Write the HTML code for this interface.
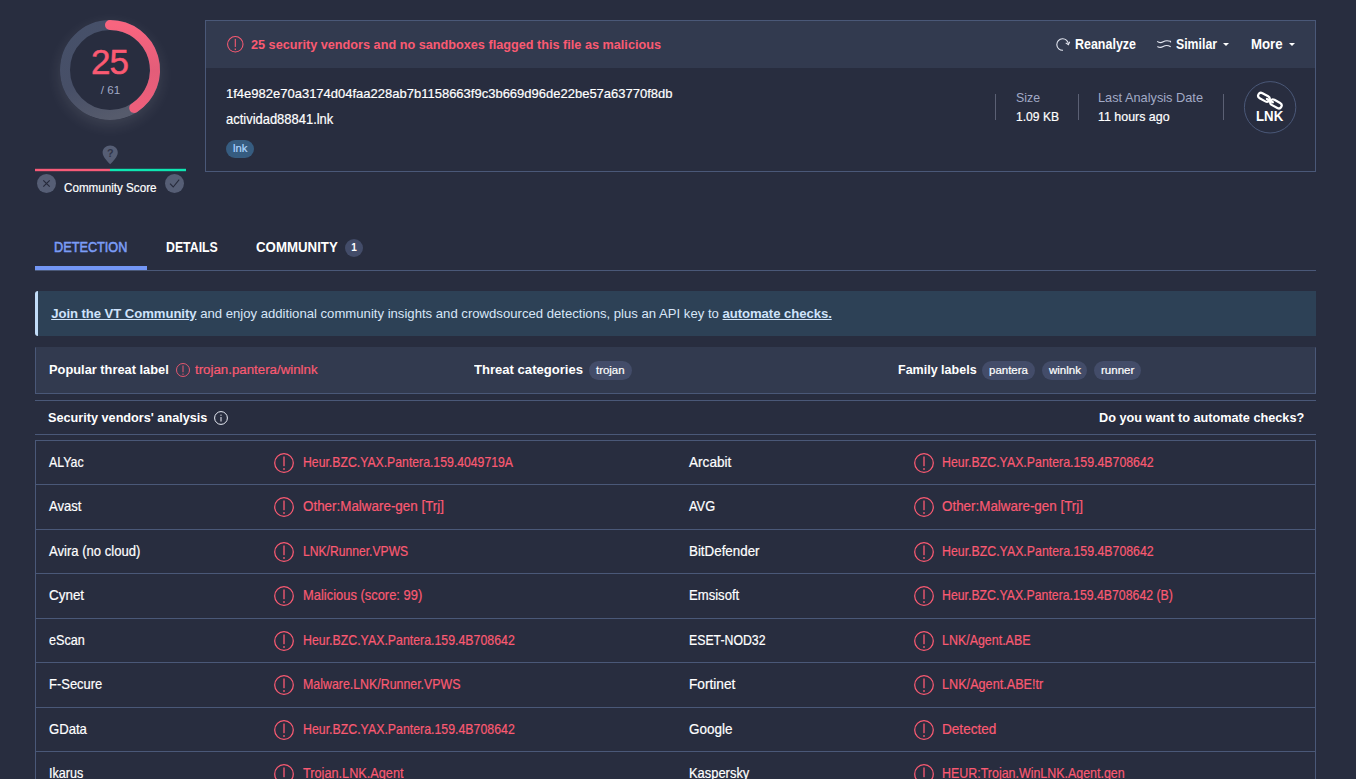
<!DOCTYPE html>
<html lang="en">
<head>
<meta charset="utf-8">
<title>VirusTotal - File - 1f4e982e70a3174d04faa228ab7b1158663f9c3b669d96de22be57a63770f8db</title>
<style>
html,body{margin:0;padding:0}
body{width:1356px;height:779px;overflow:hidden;position:relative;background:#282d3f;color:#fff;
 font-family:"Liberation Sans",Arial,sans-serif;font-size:13px;line-height:20px}
.a{position:absolute;white-space:nowrap}
.b{font-weight:700}
.red{color:#fa5a72}
.mut{color:#a2aac6}
svg{position:absolute;overflow:visible}
/* top panel */
.panel{position:absolute;left:205px;top:20px;width:1109px;height:150px;border:1px solid #4a5878}
.phead{position:absolute;left:0;top:0;width:1109px;height:47px;background:#323a4f}
.vdiv{position:absolute;width:1px;height:26px;top:94px;background:#5b6074}
.pill{position:absolute;height:19px;line-height:19px;border-radius:10px;background:#434c69;color:#f2f4fa;font-size:11.3px;text-align:center;white-space:nowrap}
/* tabs */
.tabline{position:absolute;left:35px;top:270px;width:1281px;height:1px;background:#4a5878}
.tabact{position:absolute;left:35px;top:266px;width:112px;height:4px;background:#7396f5}
.tab{position:absolute;font-size:14px;white-space:nowrap}
.pt{font-size:11.1px;color:#fff;-webkit-text-stroke:0.2px #fff}
/* banner */
.banner{position:absolute;left:35px;top:291px;width:1278px;height:45px;background:#2d4156;border-left:3px solid #c2dcf8;border-radius:3px 0 0 3px}
.banner span{position:absolute;left:13.2px;top:13px;font-size:13.13px;color:#d7e6f8;white-space:nowrap}
.banner b{color:#cfe3fb;text-decoration:underline;letter-spacing:-0.06px}
/* threat */
.threat{position:absolute;left:35px;top:347px;width:1281px;height:47px;background:#323a4f;border:1px solid #4a5878;border-top-color:#323a4f;box-sizing:border-box;border-right-color:#4a5878}
.hline{position:absolute;left:35px;width:1281px;height:1px;background:#4a5878}
/* table */
.tbl{position:absolute;left:35px;top:440px;width:1281px;height:345px;border:1px solid #4a5878;border-bottom:0;box-sizing:border-box}
.rl{position:absolute;left:36px;width:1279px;height:1px;background:#4a5878}
.vn{font-size:14.3px;color:#fff;-webkit-text-stroke:0.2px #fff}
.dt{font-size:14.4px;color:#fa5a72;-webkit-text-stroke:0.2px #fa5a72}
.di{width:20px;height:20px}
.w{-webkit-text-stroke:0.2px #fff}
</style>
</head>
<body>
<svg width="0" height="0" style="left:0;top:0">
 <defs>
  <symbol id="alert" viewBox="0 0 20 20" overflow="visible">
   <circle cx="10" cy="10" r="9.3" fill="none" stroke="#fa5a72" stroke-width="1.25"/>
   <rect x="9.35" y="3.5" width="1.3" height="9.7" fill="#fa5a72"/>
   <rect x="9.3" y="15.1" width="1.4" height="1.8" fill="#fa5a72"/>
  </symbol>
  <linearGradient id="rg" x1="0" y1="0" x2="0" y2="1">
   <stop offset="0" stop-color="#f8657f"/>
   <stop offset="0.55" stop-color="#e35d79"/>
   <stop offset="1" stop-color="#ee5f7b"/>
  </linearGradient>
  <linearGradient id="gg" x1="0.2" y1="0" x2="0.6" y2="1">
   <stop offset="0" stop-color="#465069"/>
   <stop offset="0.55" stop-color="#474f67"/>
   <stop offset="1" stop-color="#565b6c"/>
  </linearGradient>
 </defs>
</svg>

<!-- detection ring -->
<div style="position:absolute;left:60px;top:20px;width:100px;height:100px;border-radius:50%;box-shadow:0 5px 16px rgba(255,255,255,0.11)"></div>
<svg style="left:50px;top:10px" width="120" height="120" viewBox="0 0 120 120">
 <circle cx="60" cy="60" r="50" fill="#282d3f"/>
 <circle cx="60" cy="60" r="45" fill="none" stroke="url(#gg)" stroke-width="10"/>
 <path d="M60 15 A45 45 0 0 1 84.18 97.95" fill="none" stroke="url(#rg)" stroke-width="10" stroke-linecap="round"/>
</svg>
<div class="a red" style="left:70px;top:42px;width:80px;text-align:center;font-size:35px;line-height:40px;letter-spacing:-1px;text-indent:-1px;-webkit-text-stroke:0.5px #fa5a72">25</div>
<div class="a mut" style="left:70px;top:80.5px;width:81px;text-align:center;font-size:11.6px;line-height:18px">/ 61</div>

<!-- community score -->
<svg style="left:101.9px;top:144.9px" width="16.4" height="20" viewBox="0 0 16 21" preserveAspectRatio="none">
 <path d="M8 0.5C3.9 0.5 0.6 3.7 0.6 7.8c0 4.6 4.9 9.6 7.4 12.4 2.5-2.8 7.4-7.8 7.4-12.4C15.4 3.7 12.1 0.5 8 0.5z" fill="#565e75"/>
 <text x="8" y="12.3" font-size="10.5" font-weight="700" text-anchor="middle" fill="#2f3448" font-family="Liberation Sans, sans-serif">?</text>
</svg>
<svg style="left:35px;top:168px" width="151" height="4" viewBox="0 0 151 4"><rect x="0" y="0.8" width="75" height="2.4" fill="#f85b78"/><rect x="75" y="0.8" width="76" height="2.4" fill="#0ee6b2"/></svg>
<svg style="left:36.5px;top:174px" width="19" height="19" viewBox="0 0 19 19">
 <circle cx="9.5" cy="9.5" r="9.5" fill="#565e75"/>
 <path d="M6.3 6.3l6.4 6.4M12.7 6.3l-6.4 6.4" stroke="#262a3b" stroke-width="1.2" fill="none"/>
</svg>
<svg style="left:164.7px;top:174px" width="19" height="19" viewBox="0 0 19 19">
 <circle cx="9.5" cy="9.5" r="9.5" fill="#565e75"/>
 <path d="M5 9.7l3.2 3.3 6-7.3" stroke="#262a3b" stroke-width="1.1" fill="none"/>
</svg>
<div class="a w" style="left:63.7px;font-size:13.5px;top:178.30px;transform:scaleX(0.8621);transform-origin:0 0;">Community Score</div>

<!-- file panel -->
<div class="panel">
 <div class="phead"></div>
</div>
<svg style="left:227px;top:36px" width="16.6" height="16.6" viewBox="0 0 20 20"><use href="#alert"/></svg>
<div class="a b red" style="left:251.1px;font-size:12.8px;top:35.20px;transform:scaleX(0.9906);transform-origin:0 0;">25 security vendors and no sandboxes flagged this file as malicious</div>

<!-- actions -->
<svg style="left:1055px;top:37px" width="16" height="15" viewBox="0 0 16 15" fill="none" stroke="#e4e7f1" stroke-width="1.1">
 <path d="M8 13.3A5.8 5.8 0 1 1 13.4 7.5"/>
 <path d="M10.7 5.9l2.7 1.8 1.3-3"/>
</svg>
<div class="a b" style="left:1075px;font-size:13.8px;top:35.00px;transform:scaleX(0.9037);transform-origin:0 0;">Reanalyze</div>
<svg style="left:1157px;top:40px" width="14" height="9" viewBox="0 0 14 9" fill="none" stroke="#e4e7f1" stroke-width="1.15">
 <path d="M0.2 1.4C2 2.9 4.3 3 6.2 1.8S10.6 0.5 13.4 1.3l0.3 1.1"/>
 <path d="M0.4 6.4C2.2 7.6 4.3 7.6 6.2 6.5S10.6 5 13.7 6.7"/>
</svg>
<div class="a b" style="left:1175.5px;font-size:13.8px;top:35.00px;transform:scaleX(0.8910);transform-origin:0 0;">Similar</div>
<svg style="left:1223px;top:43px" width="6" height="3" viewBox="0 0 6 3"><path d="M0 0h6L3 3z" fill="#fff"/></svg>
<div class="a b" style="left:1250.5px;font-size:13.8px;top:35.00px;transform:scaleX(0.9585);transform-origin:0 0;">More</div>
<svg style="left:1289px;top:43px" width="6" height="3" viewBox="0 0 6 3"><path d="M0 0h6L3 3z" fill="#fff"/></svg>

<!-- file info -->
<div class="a w" style="left:225.5px;font-size:13.2px;top:83.80px;transform:scaleX(0.9857);transform-origin:0 0;">1f4e982e70a3174d04faa228ab7b1158663f9c3b669d96de22be57a63770f8db</div>
<div class="a w" style="left:225.5px;font-size:14.2px;top:108.80px;transform:scaleX(0.9129);transform-origin:0 0;">actividad88841.lnk</div>
<div class="pill" style="left:226px;top:139.5px;width:28px;height:18px;background:#365c80"></div>
<div class="a" style="left:232.7px;color:#acd5ff;font-size:10.8px;-webkit-text-stroke:0.2px #acd5ff;top:138.00px;transform:scaleX(1.0425);transform-origin:0 0;">lnk</div>

<div class="vdiv" style="left:995px"></div>
<div class="a mut" style="left:1015.5px;font-size:13.5px;top:88.20px;transform:scaleX(0.9137);transform-origin:0 0;">Size</div>
<div class="a w" style="left:1015.5px;font-size:13.3px;top:107.40px;transform:scaleX(0.9089);transform-origin:0 0;">1.09 KB</div>
<div class="vdiv" style="left:1078px"></div>
<div class="a mut" style="left:1098px;font-size:13.5px;top:88.20px;transform:scaleX(0.9454);transform-origin:0 0;">Last Analysis Date</div>
<div class="a w" style="left:1098px;font-size:13.3px;top:107.40px;transform:scaleX(0.9342);transform-origin:0 0;">11 hours ago</div>
<div class="vdiv" style="left:1223px"></div>
<svg style="left:1243.5px;top:80.5px" width="53" height="53" viewBox="0 0 53 53">
 <circle cx="26.1" cy="26.3" r="25.7" fill="none" stroke="#4a5878" stroke-width="1"/>
 <g fill="none" stroke="#fff" stroke-width="2.2" transform="translate(25.9 19.6) rotate(29)">
  <rect x="-13" y="-2.9" width="12.3" height="5.8" rx="2.9"/>
  <rect x="0.7" y="-2.9" width="12.3" height="5.8" rx="2.9"/>
  <path d="M-3.4 0H3.4" stroke-linecap="round"/>
 </g>
</svg>
<div class="a b" style="left:1255.6px;font-size:14px;top:105.80px;transform:scaleX(0.9451);transform-origin:0 0;">LNK</div>

<!-- tabs -->
<div class="tab" style="left:54.3px;color:#7b9cf6;-webkit-text-stroke:0.55px #7b9cf6;top:237.40px;transform:scaleX(0.9074);transform-origin:0 0;">DETECTION</div>
<div class="tab b" style="left:166.3px;top:237.40px;transform:scaleX(0.8801);transform-origin:0 0;">DETAILS</div>
<div class="tab b" style="left:256.3px;top:237.40px;transform:scaleX(0.9475);transform-origin:0 0;">COMMUNITY</div>
<div class="a b" style="left:345px;top:238.5px;width:18px;height:18px;border-radius:9px;background:#434c69;font-size:10px;line-height:18px;text-align:center">1</div>
<div class="tabline"></div>
<div class="tabact"></div>

<!-- banner -->
<div class="banner"><span><b>Join the VT Community</b> and enjoy additional community insights and crowdsourced detections, plus an API key to <b>automate checks.</b></span></div>

<!-- threat labels -->
<div class="threat"></div>
<div class="a b" style="left:49px;font-size:13.7px;top:359.50px;transform:scaleX(0.9375);transform-origin:0 0;">Popular threat label</div>
<svg style="left:176px;top:363px" width="14" height="14" viewBox="0 0 20 20"><use href="#alert"/></svg>
<div class="a red" style="left:195px;font-size:13.7px;-webkit-text-stroke:0.2px #fa5a72;top:359.60px;transform:scaleX(0.9706);transform-origin:0 0;">trojan.pantera/winlnk</div>
<div class="a b" style="left:473.5px;font-size:13.7px;top:359.50px;transform:scaleX(0.9552);transform-origin:0 0;">Threat categories</div>
<div class="pill" style="left:589px;top:361px;width:43px"></div>
<div class="a pt" style="left:596px;top:360.30px;transform:scaleX(1.0301);transform-origin:0 0;">trojan</div>
<div class="a b" style="left:897.5px;font-size:13.7px;top:359.50px;transform:scaleX(0.9143);transform-origin:0 0;">Family labels</div>
<div class="pill" style="left:982px;top:361px;width:52.5px"></div>
<div class="a pt" style="left:989px;top:360.30px;transform:scaleX(1.0361);transform-origin:0 0;">pantera</div>
<div class="pill" style="left:1042.2px;top:361px;width:44.8px"></div>
<div class="a pt" style="left:1048.5px;top:360.30px;transform:scaleX(1.0380);transform-origin:0 0;">winlnk</div>
<div class="pill" style="left:1094px;top:361px;width:47px"></div>
<div class="a pt" style="left:1100.7px;top:360.30px;transform:scaleX(1.0412);transform-origin:0 0;">runner</div>

<!-- vendors header -->
<div class="hline" style="top:400px"></div>
<div class="hline" style="top:434px"></div>
<div class="a b" style="left:48px;font-size:13.7px;top:408.10px;transform:scaleX(0.9259);transform-origin:0 0;">Security vendors' analysis</div>
<svg style="left:214px;top:411px" width="14" height="14" viewBox="0 0 14 14">
 <circle cx="7" cy="7" r="6.4" fill="none" stroke="#e9ecf5" stroke-width="1"/>
 <rect x="6.5" y="6" width="1" height="4.5" fill="#e9ecf5"/>
 <rect x="6.5" y="3.6" width="1" height="1.2" fill="#e9ecf5"/>
</svg>
<div class="a b" style="left:1099px;font-size:13.7px;top:408.10px;transform:scaleX(0.9271);transform-origin:0 0;">Do you want to automate checks?</div>

<!-- vendors table -->
<div class="tbl"></div>
<div class="rl" style="top:484px"></div>
<div class="rl" style="top:529px"></div>
<div class="rl" style="top:573px"></div>
<div class="rl" style="top:618px"></div>
<div class="rl" style="top:662px"></div>
<div class="rl" style="top:707px"></div>
<div class="rl" style="top:751px"></div>
<div class="a vn" style="left:49.4px;top:452.00px;transform:scaleX(0.8672);transform-origin:0 0;">ALYac</div><svg class="di" style="left:274px;top:453.0px" viewBox="0 0 20 20"><use href="#alert"/></svg><div class="a dt" style="left:302.7px;top:452.00px;transform:scaleX(0.8504);transform-origin:0 0;">Heur.BZC.YAX.Pantera.159.4049719A</div><div class="a vn" style="left:689.2px;top:452.00px;transform:scaleX(0.9506);transform-origin:0 0;">Arcabit</div><svg class="di" style="left:913.7px;top:453.0px" viewBox="0 0 20 20"><use href="#alert"/></svg><div class="a dt" style="left:942.4px;top:452.00px;transform:scaleX(0.8573);transform-origin:0 0;">Heur.BZC.YAX.Pantera.159.4B708642</div>
<div class="a vn" style="left:49.4px;top:496.40px;transform:scaleX(0.9127);transform-origin:0 0;">Avast</div><svg class="di" style="left:274px;top:497.4px" viewBox="0 0 20 20"><use href="#alert"/></svg><div class="a dt" style="left:302.7px;top:496.40px;transform:scaleX(0.9312);transform-origin:0 0;">Other:Malware-gen [Trj]</div><div class="a vn" style="left:689.2px;top:496.40px;transform:scaleX(0.8957);transform-origin:0 0;">AVG</div><svg class="di" style="left:913.7px;top:497.4px" viewBox="0 0 20 20"><use href="#alert"/></svg><div class="a dt" style="left:942.4px;top:496.40px;transform:scaleX(0.9312);transform-origin:0 0;">Other:Malware-gen [Trj]</div>
<div class="a vn" style="left:49.4px;top:540.90px;transform:scaleX(0.9141);transform-origin:0 0;">Avira (no cloud)</div><svg class="di" style="left:274px;top:541.9px" viewBox="0 0 20 20"><use href="#alert"/></svg><div class="a dt" style="left:302.7px;top:540.90px;transform:scaleX(0.8431);transform-origin:0 0;">LNK/Runner.VPWS</div><div class="a vn" style="left:689.2px;top:540.90px;transform:scaleX(0.9338);transform-origin:0 0;">BitDefender</div><svg class="di" style="left:913.7px;top:541.9px" viewBox="0 0 20 20"><use href="#alert"/></svg><div class="a dt" style="left:942.4px;top:540.90px;transform:scaleX(0.8573);transform-origin:0 0;">Heur.BZC.YAX.Pantera.159.4B708642</div>
<div class="a vn" style="left:49.4px;top:585.30px;transform:scaleX(0.9395);transform-origin:0 0;">Cynet</div><svg class="di" style="left:274px;top:586.3px" viewBox="0 0 20 20"><use href="#alert"/></svg><div class="a dt" style="left:302.7px;top:585.30px;transform:scaleX(0.8978);transform-origin:0 0;">Malicious (score: 99)</div><div class="a vn" style="left:689.2px;top:585.30px;transform:scaleX(0.9156);transform-origin:0 0;">Emsisoft</div><svg class="di" style="left:913.7px;top:586.3px" viewBox="0 0 20 20"><use href="#alert"/></svg><div class="a dt" style="left:942.4px;top:585.30px;transform:scaleX(0.8548);transform-origin:0 0;">Heur.BZC.YAX.Pantera.159.4B708642 (B)</div>
<div class="a vn" style="left:49.4px;top:629.70px;transform:scaleX(0.8829);transform-origin:0 0;">eScan</div><svg class="di" style="left:274px;top:630.7px" viewBox="0 0 20 20"><use href="#alert"/></svg><div class="a dt" style="left:302.7px;top:629.70px;transform:scaleX(0.8577);transform-origin:0 0;">Heur.BZC.YAX.Pantera.159.4B708642</div><div class="a vn" style="left:689.2px;top:629.70px;transform:scaleX(0.8596);transform-origin:0 0;">ESET-NOD32</div><svg class="di" style="left:913.7px;top:630.7px" viewBox="0 0 20 20"><use href="#alert"/></svg><div class="a dt" style="left:942.4px;top:629.70px;transform:scaleX(0.8642);transform-origin:0 0;">LNK/Agent.ABE</div>
<div class="a vn" style="left:49.4px;top:674.20px;transform:scaleX(0.9065);transform-origin:0 0;">F-Secure</div><svg class="di" style="left:274px;top:675.2px" viewBox="0 0 20 20"><use href="#alert"/></svg><div class="a dt" style="left:302.7px;top:674.20px;transform:scaleX(0.8599);transform-origin:0 0;">Malware.LNK/Runner.VPWS</div><div class="a vn" style="left:689.2px;top:674.20px;transform:scaleX(0.9573);transform-origin:0 0;">Fortinet</div><svg class="di" style="left:913.7px;top:675.2px" viewBox="0 0 20 20"><use href="#alert"/></svg><div class="a dt" style="left:942.4px;top:674.20px;transform:scaleX(0.8794);transform-origin:0 0;">LNK/Agent.ABE!tr</div>
<div class="a vn" style="left:49.4px;top:718.60px;transform:scaleX(0.9171);transform-origin:0 0;">GData</div><svg class="di" style="left:274px;top:719.6px" viewBox="0 0 20 20"><use href="#alert"/></svg><div class="a dt" style="left:302.7px;top:718.60px;transform:scaleX(0.8577);transform-origin:0 0;">Heur.BZC.YAX.Pantera.159.4B708642</div><div class="a vn" style="left:689.2px;top:718.60px;transform:scaleX(0.9412);transform-origin:0 0;">Google</div><svg class="di" style="left:913.7px;top:719.6px" viewBox="0 0 20 20"><use href="#alert"/></svg><div class="a dt" style="left:942.4px;top:718.60px;transform:scaleX(0.9443);transform-origin:0 0;">Detected</div>
<div class="a vn" style="left:49.4px;top:763.00px;transform:scaleX(0.8809);transform-origin:0 0;">Ikarus</div><svg class="di" style="left:274px;top:764.0px" viewBox="0 0 20 20"><use href="#alert"/></svg><div class="a dt" style="left:302.7px;top:763.00px;transform:scaleX(0.8827);transform-origin:0 0;">Trojan.LNK.Agent</div><div class="a vn" style="left:689.2px;top:763.00px;transform:scaleX(0.9034);transform-origin:0 0;">Kaspersky</div><svg class="di" style="left:913.7px;top:764.0px" viewBox="0 0 20 20"><use href="#alert"/></svg><div class="a dt" style="left:942.4px;top:763.00px;transform:scaleX(0.8641);transform-origin:0 0;">HEUR:Trojan.WinLNK.Agent.gen</div>
</body>
</html>
